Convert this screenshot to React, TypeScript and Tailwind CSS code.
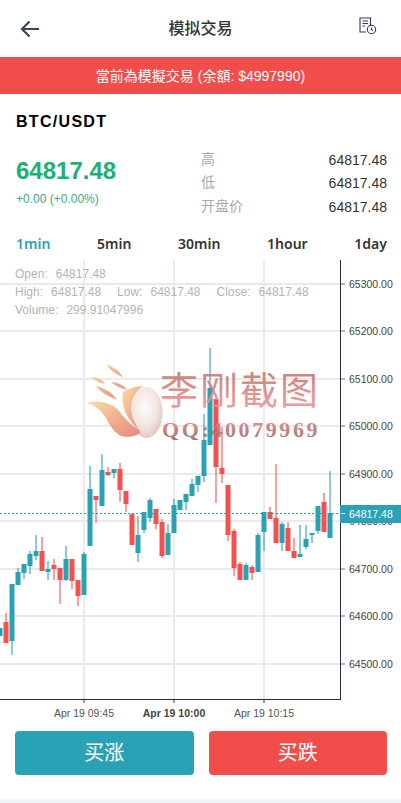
import type { ReactNode } from 'react';

const UP = '#2aa2b6';
const DOWN = '#f5504e';

// [x, wickTop, wickBottom, bodyTop, bodyBottom, up]
const candles: [number, number, number, number, number, boolean][] = [
  [0, 628, 636, 628, 636, true],
  [6, 613, 643, 622, 643, false],
  [12, 584, 655, 584, 641, true],
  [18, 568, 585, 572, 585, true],
  [24, 564, 579, 564, 573, true],
  [30, 551, 574, 554, 566, true],
  [36, 535, 560, 551, 556, true],
  [42, 537, 571, 551, 571, false],
  [48, 561, 580, 569, 572, true],
  [54, 559, 580, 565, 569, false],
  [60, 568, 604, 568, 580, false],
  [66, 546, 581, 559, 580, true],
  [72, 559, 589, 559, 581, false],
  [78, 580, 606, 580, 596, false],
  [84, 552, 595, 554, 595, true],
  [90, 466, 546, 489, 546, true],
  [96, 496, 523, 496, 500, false],
  [102, 454, 506, 470, 506, true],
  [108, 467, 476, 472, 475, false],
  [114, 469, 478, 469, 473, true],
  [120, 463, 502, 469, 490, false],
  [126, 491, 512, 491, 504, false],
  [132, 514, 545, 514, 545, false],
  [138, 516, 562, 535, 553, true],
  [144, 512, 533, 512, 530, true],
  [150, 498, 522, 500, 518, true],
  [156, 509, 529, 509, 524, false],
  [162, 519, 558, 522, 556, false],
  [168, 524, 555, 533, 555, true],
  [174, 499, 533, 505, 533, true],
  [180, 500, 510, 500, 510, true],
  [186, 494, 510, 494, 502, true],
  [192, 479, 496, 484, 496, true],
  [198, 476, 492, 476, 485, true],
  [204, 414, 482, 440, 476, true],
  [210, 348, 445, 388, 445, true],
  [216, 399, 503, 399, 467, false],
  [222, 427, 483, 468, 474, false],
  [228, 485, 541, 485, 535, false],
  [234, 529, 576, 531, 568, false],
  [240, 562, 580, 564, 580, false],
  [246, 563, 580, 565, 580, true],
  [252, 565, 580, 567, 573, false],
  [258, 533, 572, 535, 572, true],
  [264, 512, 551, 512, 532, true],
  [270, 507, 519, 512, 519, false],
  [276, 464, 543, 518, 543, false],
  [282, 522, 551, 524, 543, true],
  [288, 522, 551, 528, 551, false],
  [294, 538, 558, 551, 558, false],
  [300, 525, 557, 554, 557, true],
  [306, 525, 549, 539, 547, true],
  [312, 533, 543, 533, 535, true],
  [318, 506, 534, 506, 531, true],
  [324, 493, 532, 502, 532, false],
  [330, 471, 538, 513, 538, true],
];

// [y, label, line is two pixels wide]
const priceTicks: [number, string, boolean][] = [
  [284, '65300.00', true],
  [331, '65200.00', false],
  [379, '65100.00', false],
  [426, '65000.00', false],
  [474, '64900.00', false],
  [521, '64800.00', false],
  [569, '64700.00', true],
  [616, '64600.00', false],
  [664, '64500.00', true],
];

function Stat({ label, value }: { label: string; value: string }) {
  return (
    <div className="flex items-center justify-between h-[23.5px]">
      <span className="text-[#a9a9a9] text-sm">{label}</span>
      <span className="text-[#333] text-sm pt-[2px]">{value}</span>
    </div>
  );
}

function TradeButton({ color, children }: { color: string; children: ReactNode }) {
  return (
    <button type="button" className={`h-11 flex-1 rounded text-white text-xl ${color}`}>
      {children}
    </button>
  );
}

function Legend({ label, value }: { label: string; value: string }) {
  return (
    <span>
      {label}:<span className="ml-[8px]">{value}</span>
    </span>
  );
}

function Chart() {
  return (
    <svg width="401" height="461" viewBox="0 260 401 461" className="block">
      <defs>
        <radialGradient id="ball" cx="0.45" cy="0.4" r="0.7">
          <stop offset="0" stopColor="#fdfbfa" />
          <stop offset="0.55" stopColor="#f1e4df" />
          <stop offset="1" stopColor="#d8b5aa" />
        </radialGradient>
        <linearGradient id="flame" x1="0" y1="0" x2="1" y2="1">
          <stop offset="0" stopColor="#fcdc9c" />
          <stop offset="0.5" stopColor="#efab85" />
          <stop offset="1" stopColor="#e37f76" />
        </linearGradient>
        <linearGradient id="mark" x1="0" y1="0" x2="0" y2="1">
          <stop offset="0" stopColor="#b9716c" />
          <stop offset="1" stopColor="#f79a98" />
        </linearGradient>
        <linearGradient id="qq" x1="0" y1="0" x2="0" y2="1">
          <stop offset="0" stopColor="#f08a8a" />
          <stop offset="1" stopColor="#8b6a6a" />
        </linearGradient>
      </defs>

      {priceTicks.map(([y, , wide]) => (
        <rect
          key={y}
          x="0"
          y={wide ? y - 1 : y - 0.5}
          width="340"
          height={wide ? 2 : 1}
          fill={wide ? '#e7eaea' : '#d6d9da'}
        />
      ))}
      {[84, 174, 264].map((x) => (
        <rect key={x} x={x - 1} y="260" width="2" height="439" fill="#e8ecec" />
      ))}

      {candles.map(([x, wt, wb, bt, bb, up]) => (
        <g key={x} fill={up ? UP : DOWN}>
          <rect x={x - 1} y={wt} width="2" height={wb - wt} opacity="0.55" />
          <rect x={x - 2.5} y={bt} width="5" height={bb - bt} />
        </g>
      ))}

      <line x1="0" y1="513.5" x2="345" y2="513.5" stroke={UP} strokeDasharray="2 2" />

      {/* axes */}
      <rect x="340" y="260" width="1" height="440" fill="#2a2a48" />
      <rect x="0" y="699" width="341" height="1" fill="#2a2a48" />
      {priceTicks.map(([y]) => (
        <rect key={y} x="341" y={y - 0.5} width="4" height="1" fill="#70707f" />
      ))}
      {[84, 174, 264].map((x) => (
        <rect key={x} x={x - 1} y="700" width="2" height="3" fill="#9a9aa6" />
      ))}
      {priceTicks.map(([y, label]) => (
        <text key={y} x="349" y={y + 4} fontSize="10.5" fill="#444">
          {label}
        </text>
      ))}

      <text x="84" y="717" textAnchor="middle" fontSize="10.5" fill="#555">Apr 19 09:45</text>
      <text x="174" y="717" textAnchor="middle" fontSize="10.5" fontWeight="700" fill="#444">Apr 19 10:00</text>
      <text x="264" y="717" textAnchor="middle" fontSize="10.5" fill="#555">Apr 19 10:15</text>

      {/* last price */}
      <rect x="340" y="505" width="61" height="18" fill={UP} />
      <rect x="341" y="513" width="4" height="1" fill="#fff" />
      <text x="349" y="518" fontSize="10.5" fill="#fff">64817.48</text>

      {/* watermark */}
      <g opacity="0.92">
        <ellipse cx="146.5" cy="412.5" rx="16" ry="25.5" fill="url(#ball)" />
        <path d="M86 403 C98 400 112 402 120 412 C126 420 132 426 138 429 C140 430 141 432 139 434 C135 436 131 437 127 437 C116 437 110 426 106 418 C101 410 95 405 86 403Z" fill="url(#flame)" />
        <path d="M123 392 C130 388 136 386 143 386 C135 392 131 400 131 408 C131 416 135 424 139 429 C132 424 124 414 123 404 C122 400 122 396 123 392Z" fill="url(#flame)" />
        <path d="M107 365 C114 367 120 371 123 378 C118 374 111 372 107 365Z M91 377 C97 377 103 380 105 384 C100 383 95 381 91 377Z M111 382 C117 382 124 385 127 390 C121 388 115 386 111 382Z M96 386 C104 388 112 392 117 400 C110 397 101 393 96 386Z" fill="url(#flame)" />
        <text x="160" y="404" fontSize="38" letterSpacing="2" fill="url(#mark)" fontFamily="'Noto Sans CJK SC', sans-serif">李刚截图</text>
        <text x="162" y="437" fontSize="22" fontWeight="700" letterSpacing="2.6" fill="url(#qq)" fontFamily="'Liberation Serif', serif">QQ:40079969</text>
      </g>
    </svg>
  );
}

export default function App() {
  return (
    <div className="w-[401px] h-[803px] bg-white flex flex-col overflow-hidden font-['Liberation_Sans','Noto_Sans_CJK_SC',sans-serif]">
      <header className="h-[57px] shrink-0 flex items-center justify-between pl-[20px] pr-[24px]">
        <svg width="20" height="18" viewBox="0 0 20 18" fill="none" stroke="#3b4560" strokeWidth="2.2">
          <path d="M19 9H2M9.5 1.5L2 9l7.5 7.5" />
        </svg>
        <h1 className="text-base font-medium text-[#333] -mt-[3px] ml-[2px] font-['Noto_Sans_CJK_SC',sans-serif]">模拟交易</h1>
        <svg width="18" height="18" viewBox="0 0 18 18" fill="none" stroke="#2f3a52" strokeWidth="1.1" className="-mt-[6px]">
          <path d="M11.5 9V1H1v14h6" />
          <path d="M3.5 4h5.5M3.5 6.5h5.5M3.5 9H6" />
          <circle cx="12.5" cy="12.5" r="4.2" />
          <path d="M12.5 10.5v2.3l1.4.8" />
        </svg>
      </header>

      <div className="h-[37px] shrink-0 bg-[#f14e4b] text-white text-sm flex items-center justify-center">
        當前為模擬交易 (余額: $4997990)
      </div>

      <div className="h-[166px] shrink-0 pl-[16px] pr-[14px] flex flex-col">
        <div className="mt-[18px] text-base font-bold text-black tracking-[1.3px] leading-5">BTC/USDT</div>
        <div className="mt-[15px] flex">
          <div className="w-[185px] pt-[10px]">
            <div className="text-[24px] leading-7 font-bold text-[#1bb076]">64817.48</div>
            <div className="mt-[6px] text-xs text-[#3aaa80]">+0.00 (+0.00%)</div>
          </div>
          <div className="flex-1">
            <Stat label="高" value="64817.48" />
            <Stat label="低" value="64817.48" />
            <Stat label="开盘价" value="64817.48" />
          </div>
        </div>
        <div className="mt-auto pb-[6px] flex justify-between text-sm font-semibold text-[#333] font-['Noto_Sans',sans-serif]">
          <span className="text-[#2aa2b6]">1min</span>
          <span>5min</span>
          <span>30min</span>
          <span>1hour</span>
          <span>1day</span>
        </div>
      </div>

      <div className="relative h-[461px] shrink-0 font-['Liberation_Sans',sans-serif]">
        <Chart />
        <div className="absolute left-[15px] top-[5px] text-xs leading-[18px] text-[#b4b4b4]">
          <div><Legend label="Open" value="64817.48" /></div>
          <div className="flex gap-4">
            <Legend label="High" value="64817.48" />
            <Legend label="Low" value="64817.48" />
            <Legend label="Close" value="64817.48" />
          </div>
          <div><Legend label="Volume" value="299.91047996" /></div>
        </div>
      </div>

      <div className="flex gap-[15px] pl-[15px] pr-[14px] mt-[10px]">
        <TradeButton color="bg-[#2aa2b6]">买涨</TradeButton>
        <TradeButton color="bg-[#f14e4b]">买跌</TradeButton>
      </div>

      <div className="mt-auto h-[4px] bg-[#f0f4f8]" />
    </div>
  );
}
